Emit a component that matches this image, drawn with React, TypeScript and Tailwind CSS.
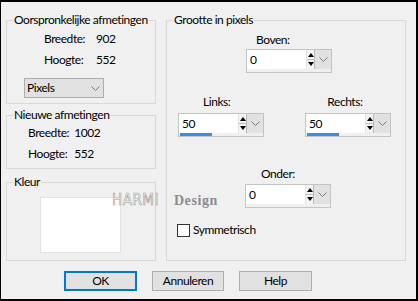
import React from 'react';

const Chevron = ({ className = '' }: { className?: string }) => (
    <svg width="9" height="5" viewBox="0 0 9 5" className={className}>
        <path d="M0.5 0.5 L4.5 4.5 L8.5 0.5" fill="none" stroke="#7a7a7a" strokeWidth="1" />
    </svg>
);

type SpinProps = { value: string; bar?: boolean };

const SpinField = ({ value, bar = false }: SpinProps) => (
    <div className="w-[86px] h-[24px] border border-[#c4c4c4] flex flex-col bg-[#f0f0f0]">
        <div className="flex h-[19px]">
            <div className="flex-1 bg-white pl-[3px] leading-[19px]">{value}</div>
            <div className="w-[8px] bg-[#f4f4f4] flex flex-col items-center justify-between py-[3px] border-l border-[#e2e2e2]">
                <div className="w-0 h-0 border-l-[3px] border-r-[3px] border-b-[4px] border-l-transparent border-r-transparent border-b-black" />
                <div className="w-full h-px bg-[#bdbdbd]" />
                <div className="w-0 h-0 border-l-[3px] border-r-[3px] border-t-[4px] border-l-transparent border-r-transparent border-t-black" />
            </div>
            <div className="w-[17px] bg-[#e1e1e1] border-l border-[#b9b9b9] flex items-center justify-center">
                <Chevron />
            </div>
        </div>
        <div className="flex-1 flex">
            {bar && <div className="w-[32px] bg-[#3c8ee0] ml-[1px]" />}
        </div>
    </div>
);

const Group = ({
    title,
    className = '',
    children,
}: {
    title: string;
    className?: string;
    children?: React.ReactNode;
}) => (
    <fieldset className={`border border-[#d9d9d9] min-w-0 ${className}`}>
        <legend className="ml-[6px] px-[1px] leading-[16px] whitespace-nowrap">{title}</legend>
        {children}
    </fieldset>
);

export default function App() {
    return (
        <div className="w-[418px] h-[301px] bg-black pt-[2px] pl-px pr-[2px] pb-[2px] flex">
            <div
                className="relative flex-1 bg-[#f0f0f0] text-[12px] tracking-[-0.45px] text-black flex flex-col pt-[10px]"
                style={{ fontFamily: 'Lato, "Liberation Sans", sans-serif' }}
            >
                <div className="flex pl-[5px] gap-[10px]">
                    {/* Left column */}
                    <div className="w-[150px] flex flex-col">
                        <Group title="Oorspronkelijke afmetingen" className="h-[92px]">
                            <div className="grid grid-cols-[52px_1fr] pl-[37px] pt-[3px] gap-y-[5px] leading-[16px]">
                                <span>Breedte:</span>
                                <span>902</span>
                                <span>Hoogte:</span>
                                <span>552</span>
                            </div>
                            <div className="ml-[17px] mt-[10px] w-[80px] h-[20px] bg-[#e1e1e1] border border-[#adadad] flex items-center justify-between pl-[2px] pr-[3px]">
                                <span>Pixels</span>
                                <Chevron />
                            </div>
                        </Group>
                        <Group title="Nieuwe afmetingen" className="h-[62px] mt-[3px]">
                            <div className="grid grid-cols-[auto_1fr] gap-x-[5px] pl-[21px] pt-[2px] gap-y-[5px] leading-[16px]">
                                <span>Breedte:</span>
                                <span>1002</span>
                                <span>Hoogte:</span>
                                <span>552</span>
                            </div>
                        </Group>
                        <Group title="Kleur" className="h-[87px] mt-[5px]">
                            <div className="ml-[33px] mt-[7px] w-[81px] h-[56px] bg-white border border-[#e3e3e3]" />
                        </Group>
                    </div>

                    {/* Right column */}
                    <Group title="Grootte in pixels" className="w-[240px] h-[249px]">
                        <div className="flex flex-col leading-[16px]">
                            <span className="ml-[89px] mt-[4px]">Boven:</span>
                            <div className="ml-[79px] mt-px">
                                <SpinField value="0" />
                            </div>
                            <div className="flex mt-[21px]">
                                <span className="ml-[36px]">Links:</span>
                                <span className="ml-[97px]">Rechts:</span>
                            </div>
                            <div className="flex mt-[3px]">
                                <div className="ml-[11px]">
                                    <SpinField value="50" bar />
                                </div>
                                <div className="ml-[41px]">
                                    <SpinField value="50" bar />
                                </div>
                            </div>
                            <span className="ml-[94px] mt-[29px]">Onder:</span>
                            <div className="ml-[78px] mt-[2px]">
                                <SpinField value="0" />
                            </div>
                            <label className="flex items-center ml-[10px] mt-[14px] gap-[3px]">
                                <span className="w-[13px] h-[13px] border border-[#333] bg-white" />
                                <span>Symmetrisch</span>
                            </label>
                        </div>
                    </Group>
                </div>

                {/* Buttons */}
                <div className="flex pl-[63px] gap-[15px] mt-[10px]">
                    <button className="w-[73px] h-[20px] bg-[#e1e1e1] border-2 border-[#0078d7] leading-none">OK</button>
                    <button className="w-[72px] h-[20px] bg-[#e1e1e1] border border-[#adadad] leading-none">Annuleren</button>
                    <button className="w-[73px] h-[20px] bg-[#e1e1e1] border border-[#adadad] leading-none">Help</button>
                </div>

                {/* Watermark */}
                <div className="absolute left-[111px] top-[187px] flex items-baseline gap-[15px] tracking-normal pointer-events-none">
                    <span
                        className="text-[15px] tracking-[0.5px] text-white [-webkit-text-stroke:0.6px_#9a9a9a]"
                        style={{ fontFamily: '"DejaVu Sans Condensed", "DejaVu Sans", sans-serif' }}
                    >
                        HARMI
                    </span>
                    <span
                        className="text-[14px] font-bold tracking-[0.6px] text-[#8d8d8d]"
                        style={{ fontFamily: '"Liberation Serif", serif' }}
                    >
                        Design
                    </span>
                </div>
            </div>
        </div>
    );
}
